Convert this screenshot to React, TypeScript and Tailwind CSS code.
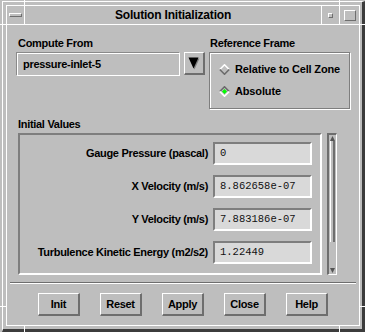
import React from 'react';

const dark = '#7e7e7e';

function Diamond({ selected }: { selected?: boolean }) {
    const tl = selected ? '#6b6b6b' : '#ffffff';
    const br = selected ? '#ffffff' : '#6b6b6b';
    return (
        <svg width="11" height="11" viewBox="0 0 11 11" className="shrink-0">
            <polygon points="5.5,0.5 10.5,5.5 5.5,10.5 0.5,5.5" fill="#bebebe" />
            <polyline points="0.8,5.5 5.5,0.8 10.2,5.5" fill="none" stroke={tl} strokeWidth="1.6" />
            <polyline points="0.8,5.5 5.5,10.2 10.2,5.5" fill="none" stroke={br} strokeWidth="1.6" />
            {selected && <polygon points="5.5,3 8,5.5 5.5,8 3,5.5" fill="#00ff00" />}
        </svg>
    );
}

function Field({ label, value }: { label: string; value: string }) {
    return (
        <div className="flex items-center justify-end gap-[5px]">
            <span className="text-[11px] font-bold tracking-[-0.3px] leading-[13px]">{label}</span>
            <div className="w-[99px] h-[23px] bg-[#d9d9d9] border-2 border-t-[#7e7e7e] border-l-[#7e7e7e] border-b-white border-r-white pl-[5px] flex items-center font-['Liberation_Mono','Courier_New',monospace] text-[10.5px] text-[#111]">
                {value}
            </div>
        </div>
    );
}

function Btn({ children }: { children: React.ReactNode }) {
    return (
        <div className="w-[42px] h-[23px] flex items-center justify-center border-t border-l border-white border-b-2 border-r-2 border-b-[#6e6e6e] border-r-[#6e6e6e] text-[11px] font-bold tracking-[-0.3px]">
            {children}
        </div>
    );
}

export default function App() {
    return (
        <div className="w-[365px] h-[332px] bg-[#bebebe] pl-[2px] pt-[1px] relative overflow-hidden text-black font-['Liberation_Sans',Arial,sans-serif]">
            {/* frame corner marks */}
            <div className="absolute left-[24px] top-0 w-px h-[5px] bg-white" />
            <div className="absolute left-[339px] top-0 w-px h-[5px] bg-white" />
            <div className="absolute left-[24px] bottom-0 w-px h-[7px] bg-white" />
            <div className="absolute left-[339px] bottom-0 w-px h-[7px] bg-white" />
            <div className="absolute left-0 top-[24px] w-[6px] h-px bg-white" />
            <div className="absolute left-0 top-[306px] w-[6px] h-px bg-white" />
            <div className="absolute right-0 top-[24px] w-[6px] h-px bg-white" />
            <div className="absolute right-0 top-[306px] w-[6px] h-px bg-white" />

            <div className="h-full flex border-l border-t border-white border-r-[3px] border-b-[3px] border-r-[#3c3c3c] border-b-[#3c3c3c] pl-[3px] pt-[3px] pr-[2px] pb-[3px]">
                <div className="flex-1 flex flex-col border border-white">
                    {/* Title bar */}
                    <div className="h-[19px] flex border-b border-white shrink-0">
                        <div className="w-[18px] border-r border-white flex items-center justify-center">
                            <div className="w-[13px] h-[4px] border-t border-l border-white border-b border-r border-b-[#6e6e6e] border-r-[#6e6e6e]" />
                        </div>
                        <div className="w-[297px] border-r border-white flex items-center justify-center text-[12px] font-bold tracking-[-0.2px]">
                            Solution Initialization
                        </div>
                        <div className="w-[18px] border-r border-white flex items-center justify-center">
                            <div className="w-[5px] h-[5px] border-t border-l border-white border-b border-r border-b-[#6e6e6e] border-r-[#6e6e6e]" />
                        </div>
                        <div className="flex-1 flex items-center justify-center">
                            <div className="w-[12px] h-[11px] border-t border-l border-white border-b border-r border-b-[#6e6e6e] border-r-[#6e6e6e]" />
                        </div>
                    </div>

                    {/* Content */}
                    <div className="flex-1 flex flex-col pt-[12px]">
                        <div className="flex pl-[9px] gap-[4px]">
                            <div className="w-[189px] flex flex-col">
                                <div className="ml-[2px] mb-[2px] text-[11px] font-bold tracking-[-0.3px] leading-[13px]">Compute From</div>
                                <div className="flex gap-[4px]">
                                    <div className="w-[164px] h-[24px] flex items-center pl-[6px] border border-t-[#8a8a8a] border-l-[#8a8a8a] border-b-white border-r-white shadow-[inset_1px_1px_0_#ffffff] text-[11px] font-bold tracking-[-0.3px]">
                                        pressure-inlet-5
                                    </div>
                                    <div className="w-[21px] h-[23px] flex items-center justify-center border-t border-l border-white border-b-2 border-r-2 border-b-[#6e6e6e] border-r-[#6e6e6e]">
                                        <svg width="14" height="14" viewBox="0 0 14 14">
                                            <polygon points="2.5,2.5 12.5,2.5 7.5,13.5" fill="#808080" />
                                            <polygon points="1.5,1.5 11.5,1.5 6.5,12.5" fill="#000" />
                                        </svg>
                                    </div>
                                </div>
                            </div>
                            <div className="w-[141px] flex flex-col">
                                <div className="ml-[1px] mb-[2px] text-[11px] font-bold tracking-[-0.3px] leading-[13px]">Reference Frame</div>
                                <div className="h-[57px] border border-[#7e7e7e] shadow-[inset_1px_1px_0_#ffffff,1px_1px_0_#ffffff] pl-[9px] pt-[10px] flex flex-col gap-[9px]">
                                    <div className="flex items-center gap-[5px] h-[13px]">
                                        <Diamond />
                                        <span className="text-[11px] font-bold tracking-[-0.15px]">Relative to Cell Zone</span>
                                    </div>
                                    <div className="flex items-center gap-[5px] h-[13px]">
                                        <Diamond selected />
                                        <span className="text-[11px] font-bold tracking-[-0.15px]">Absolute</span>
                                    </div>
                                </div>
                            </div>
                        </div>

                        <div className="ml-[11px] mt-[9px] mb-[2px] text-[11px] font-bold tracking-[-0.3px] leading-[13px]">Initial Values</div>
                        <div className="flex ml-[11px] gap-[5px]">
                            <div className="w-[304px] h-[142px] border-t-2 border-l-2 border-t-[#7e7e7e] border-l-[#7e7e7e] border-b-2 border-r-2 border-b-white border-r-white pt-[7px] pr-[8px] flex flex-col gap-[10px]">
                                <Field label="Gauge Pressure (pascal)" value="0" />
                                <Field label="X Velocity (m/s)" value="8.862658e-07" />
                                <Field label="Y Velocity (m/s)" value="7.883186e-07" />
                                <Field label="Turbulence Kinetic Energy (m2/s2)" value="1.22449" />
                            </div>
                            <div className="w-[10px] h-[142px] border-t-2 border-l-2 border-t-[#6e6e6e] border-l-[#6e6e6e] border-b border-r border-b-white border-r-white flex flex-col">
                                <div className="h-[6px] flex items-center justify-center">
                                    <svg width="5" height="5" viewBox="0 0 5 5"><polygon points="0,5 2.5,0 5,5" fill="#555" /></svg>
                                </div>
                                <div className="h-[101px] mx-[1px] border-l border-white border-r-2 border-r-[#6e6e6e]" />
                                <div className="flex-1" />
                                <div className="h-[6px] flex items-center justify-center mb-[1px]">
                                    <svg width="5" height="5" viewBox="0 0 5 5"><polygon points="0,0 5,0 2.5,5" fill="#555" /></svg>
                                </div>
                            </div>
                        </div>

                        <div className="mt-[7px] mx-[3px] h-[2px] border-t border-[#6e6e6e] border-b border-b-white" />

                        <div className="mt-[9px] flex justify-center gap-[20px]">
                            <Btn>Init</Btn>
                            <Btn>Reset</Btn>
                            <Btn>Apply</Btn>
                            <Btn>Close</Btn>
                            <Btn>Help</Btn>
                        </div>
                    </div>
                </div>
            </div>
        </div>
    );
}
